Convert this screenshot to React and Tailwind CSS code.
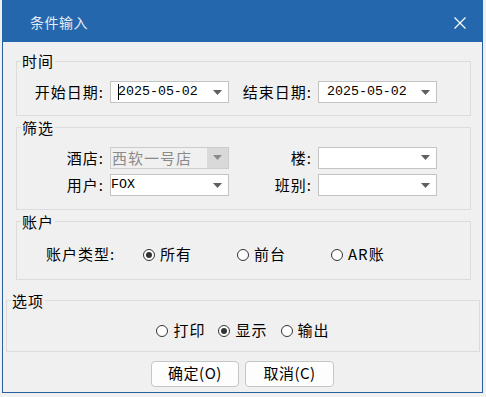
import React from 'react';

const cjk = { fontFamily: '"Noto Sans CJK SC", "Noto Sans", sans-serif' };

function Arrow({ color = '#5f5f5f' }) {
  return (
    <svg width="9" height="5" viewBox="0 0 9 5">
      <path d="M0 0H9L4.5 5Z" fill={color} />
    </svg>
  );
}

function Select({ value, mono, disabled, caret }) {
  return (
    <div
      className={`flex h-[22px] w-[119px] border ${
        disabled ? 'border-[#cccccc] bg-[#f0f0f0]' : 'border-[#c4c4c4] bg-white'
      }`}
    >
      <div className="flex flex-1 items-center overflow-hidden">
        {mono ? (
          <span className="flex items-center pl-[7px] font-['Liberation_Mono'] text-[13.3px] text-black">
            {caret && <span className="mr-[-1px] h-[16px] w-px bg-black" />}
            {!caret && <span className="w-px" />}
            {value}
          </span>
        ) : disabled ? (
          <span className="pl-px text-[15px] tracking-[1px] text-[#8a8a8a]">{value}</span>
        ) : (
          <span className="font-['Liberation_Mono'] text-[13.3px] text-black">{value}</span>
        )}
      </div>
      <div
        className={`flex w-[21px] items-center justify-center ${disabled ? 'bg-[#d9d9d9]' : ''}`}
      >
        <Arrow color={disabled ? '#8c8c8c' : '#5f5f5f'} />
      </div>
    </div>
  );
}

function Field({ label, width, children }) {
  return (
    <div className="flex items-center">
      <span className="mr-[6px] text-right text-[15px] tracking-[1px]" style={{ width }}>
        {label}
      </span>
      {children}
    </div>
  );
}

function Radio({ checked, label, width }) {
  return (
    <div className="flex items-center gap-[5px]" style={width ? { width } : undefined}>
      <span className="flex h-[12px] w-[12px] items-center justify-center rounded-full border border-[#333333] bg-white">
        {checked && <span className="h-[6px] w-[6px] rounded-full bg-[#333333]" />}
      </span>
      <span className="text-[15px] tracking-[1px]">{label}</span>
    </div>
  );
}

function Group({ title, className, children }) {
  return (
    <fieldset className={`border border-[#dcdcdc] ${className}`}>
      <legend className="ml-[4px] px-px text-[15px] leading-[20px] tracking-[1px]">{title}</legend>
      {children}
    </fieldset>
  );
}

export default function App() {
  return (
    <div className="h-[397px] w-[486px] bg-[#f0f0f0] pl-[2px] pr-[3px] text-black" style={cjk}>
      <div className="flex h-[393px] w-[481px] flex-col">
        {/* title bar */}
        <div className="flex h-[42px] items-center justify-between bg-[#2467ad] pl-[28px] pr-[17px] pt-[3px]">
          <span className="text-[14px] tracking-[0.5px] text-[#e6edf6]">条件输入</span>
          <svg width="12" height="12" viewBox="0 0 12 12">
            <path d="M0.5 0.5L11.5 11.5M11.5 0.5L0.5 11.5" stroke="#ffffff" strokeWidth="1.2" />
          </svg>
        </div>

        <div className="flex flex-1 flex-col border-x border-b border-[#2a5f9f] bg-[#f0f0f0]">
          <Group title="时间" className="ml-[13px] mr-[11px] mt-[9px]">
            <div className="flex pb-[11px] pt-[10px]">
              <Field label="开始日期:" width={87}>
                <Select value="2025-05-02" mono caret />
              </Field>
              <Field label="结束日期:" width={83}>
                <Select value="2025-05-02" mono />
              </Field>
            </div>
          </Group>

          <Group title="筛选" className="ml-[13px] mr-[11px] mt-[2px]">
            <div className="flex flex-col gap-[5px] pb-[12px] pt-[9px]">
              <div className="flex">
                <Field label="酒店:" width={87}>
                  <Select value="西软一号店" disabled />
                </Field>
                <Field label="楼:" width={83}>
                  <Select value="" />
                </Field>
              </div>
              <div className="flex">
                <Field label="用户:" width={87}>
                  <Select value="FOX" />
                </Field>
                <Field label="班别:" width={83}>
                  <Select value="" />
                </Field>
              </div>
            </div>
          </Group>

          <Group title="账户" className="ml-[13px] mr-[11px] mt-[2px]">
            <div className="mb-[13px] mt-[12px] flex h-[22px] items-center pl-[29px]">
              <span className="w-[97px] text-[15px] tracking-[1px]">账户类型:</span>
              <Radio checked label="所有" width={94} />
              <Radio label="前台" width={94} />
              <Radio label="AR账" />
            </div>
          </Group>

          <Group title="选项" className="ml-[3px] mr-[2px] mt-[11px]">
            <div className="mb-[10px] mt-[10px] flex h-[20px] items-center justify-center gap-[13px]">
              <Radio label="打印" />
              <Radio checked label="显示" />
              <Radio label="输出" />
            </div>
          </Group>

          <div className="mt-[9px] flex justify-center gap-[6px]">
            <button className="h-[26px] w-[88px] rounded-[4px] border border-[#c6c6c6] bg-[#fdfdfd] text-[15px] tracking-[0.5px]">
              确定(O)
            </button>
            <button className="h-[26px] w-[89px] rounded-[4px] border border-[#c6c6c6] bg-[#fdfdfd] text-[15px] tracking-[0.5px]">
              取消(C)
            </button>
          </div>
        </div>
      </div>
    </div>
  );
}
